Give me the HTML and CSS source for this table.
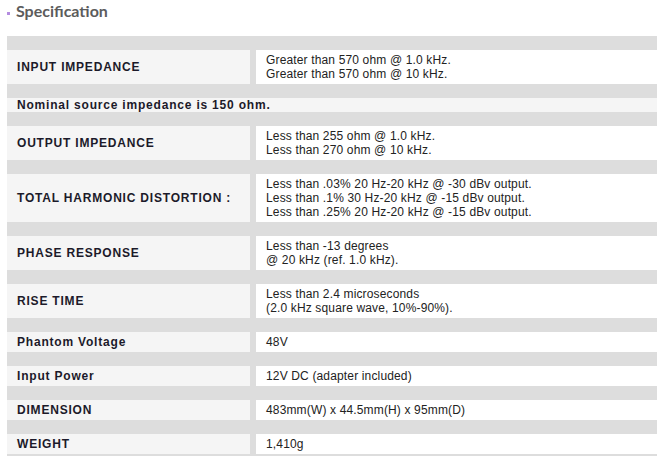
FILE: index.html
```html
<!DOCTYPE html>
<html>
<head>
<meta charset="utf-8">
<link rel="stylesheet" href="styles.css">
</head>
<body>
<h2 class="title"><span class="bullet"></span>Specification</h2>
<div class="spec">
  <div class="label">INPUT IMPEDANCE</div>
  <div class="value">Greater than 570 ohm @ 1.0 kHz.<br>Greater than 570 ohm @ 10 kHz.</div>
  <div class="note">Nominal source impedance is 150 ohm.</div>
  <div class="label">OUTPUT IMPEDANCE</div>
  <div class="value">Less than 255 ohm @ 1.0 kHz.<br>Less than 270 ohm @ 10 kHz.</div>
  <div class="label">TOTAL HARMONIC DISTORTION :</div>
  <div class="value">Less than .03% 20 Hz-20 kHz @ -30 dBv output.<br>Less than .1% 30 Hz-20 kHz @ -15 dBv output.<br>Less than .25% 20 Hz-20 kHz @ -15 dBv output.</div>
  <div class="label">PHASE RESPONSE</div>
  <div class="value">Less than -13 degrees<br>@ 20 kHz (ref. 1.0 kHz).</div>
  <div class="label">RISE TIME</div>
  <div class="value">Less than 2.4 microseconds<br>(2.0 kHz square wave, 10%-90%).</div>
  <div class="label">Phantom Voltage</div>
  <div class="value">48V</div>
  <div class="label">Input Power</div>
  <div class="value">12V DC (adapter included)</div>
  <div class="label">DIMENSION</div>
  <div class="value">483mm(W) x 44.5mm(H) x 95mm(D)</div>
  <div class="label">WEIGHT</div>
  <div class="value">1,410g</div>
</div>
</body>
</html>
```
FILE: styles.css
```css
html, body {
  margin: 0;
  padding: 0;
  background: #ffffff;
}
body {
  padding: 0 8px 0 7px;
}
.title {
  margin: 0;
  height: 36px;
  display: flex;
  align-items: flex-start;
  gap: 6px;
  font-family: "Lato", "Open Sans", sans-serif;
  font-weight: 700;
  font-size: 16px;
  line-height: 22px;
  color: #5c5c5c;
}
.bullet {
  flex: none;
  width: 3px;
  height: 3px;
  background: #b48ce0;
  margin-top: 12px;
}
.spec {
  width: 650px;
  background: #dddddd;
  display: grid;
  grid-template-columns: 243px 401px;
  column-gap: 6px;
  row-gap: 14px;
  padding-top: 14px;
  padding-bottom: 14px;
  font-family: "Liberation Sans", Arial, sans-serif;
  font-size: 12px;
  line-height: 14px;
}
.label {
  background: #f5f5f5;
  color: #1c1a2a;
  font-weight: 700;
  letter-spacing: 0.8px;
  padding: 3px 10px;
  display: flex;
  align-items: center;
}
.value {
  background: #ffffff;
  color: #222222;
  letter-spacing: 0.15px;
  padding: 3px 10px;
}
.note {
  grid-column: 1 / 3;
  background: #f5f5f5;
  color: #1c1a2a;
  font-weight: 700;
  letter-spacing: 0.8px;
  padding: 0 10px;
}
```
